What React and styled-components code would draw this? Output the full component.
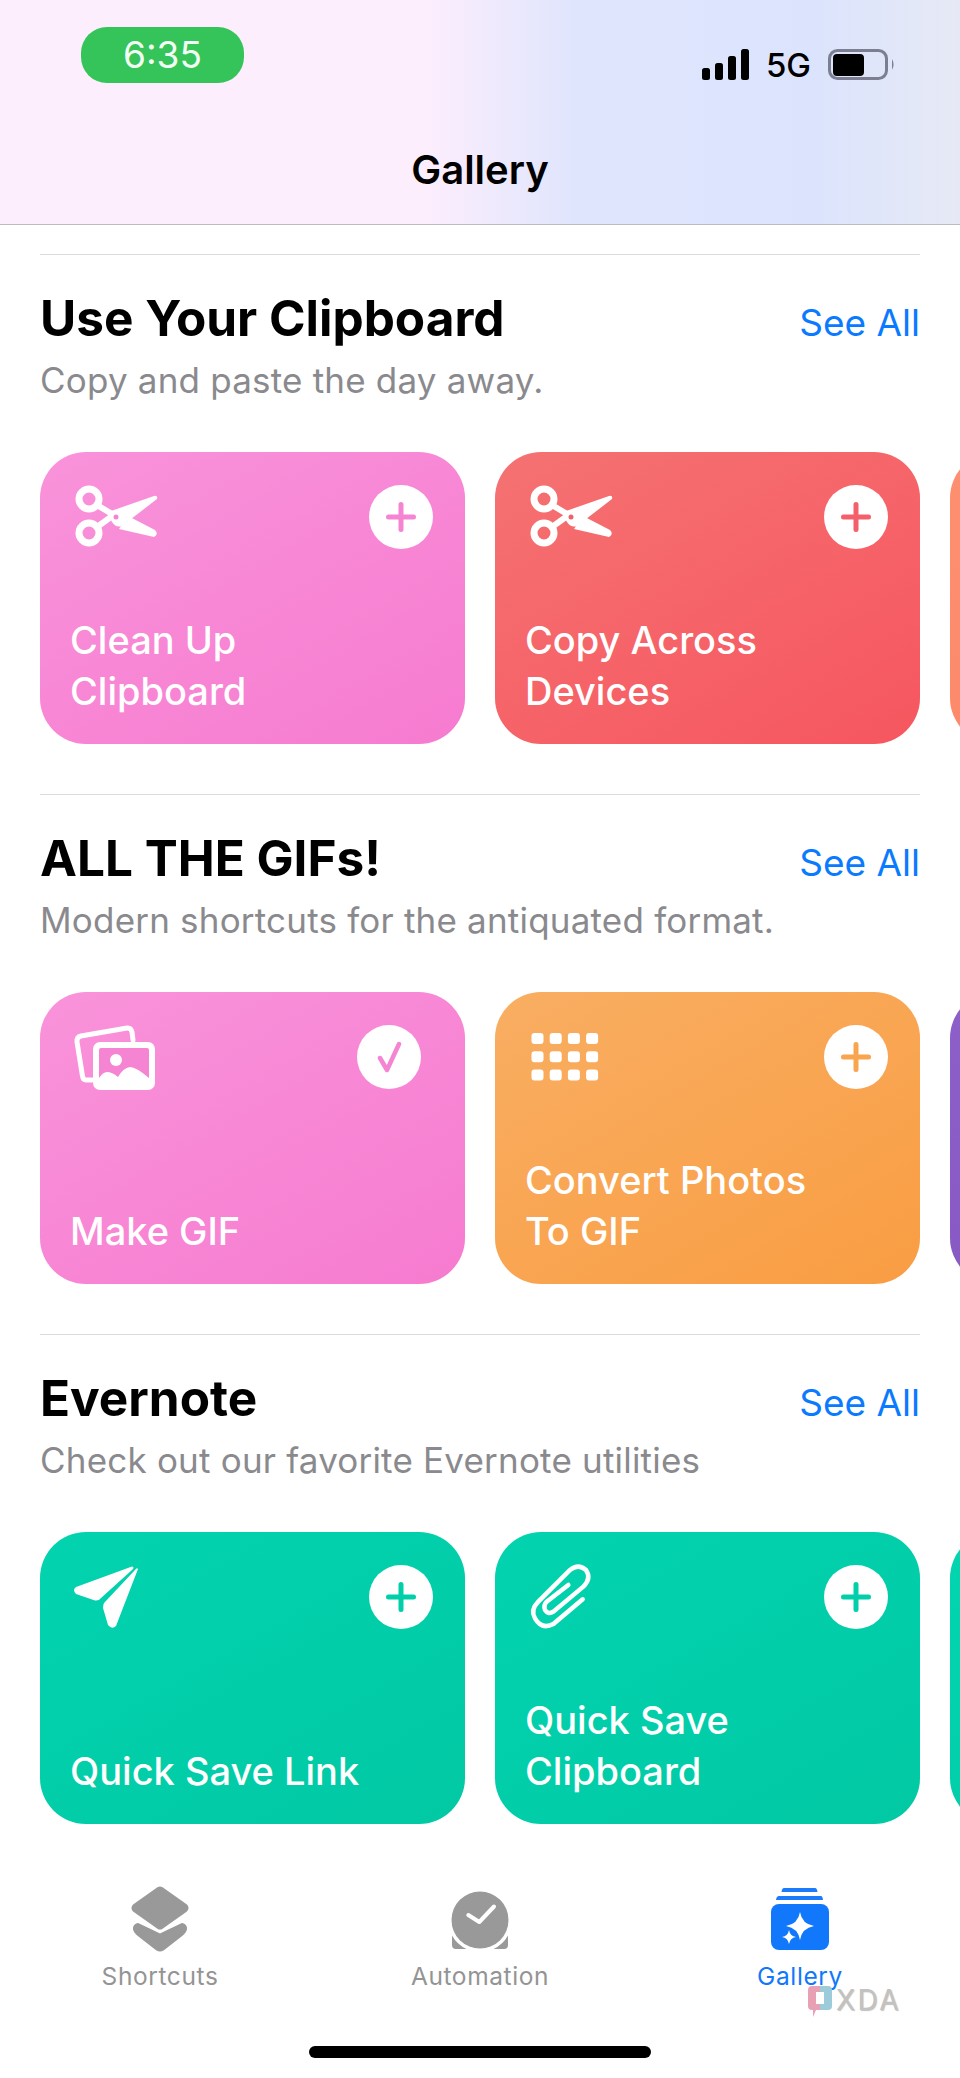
import React from 'react';
import styled, { createGlobalStyle } from 'styled-components';

const GlobalStyle = createGlobalStyle`
  html, body {
    margin: 0;
    padding: 0;
    background: #fff;
  }
  * { box-sizing: border-box; }
`

const FONT = `Inter, "Liberation Sans", sans-serif`

const Scissors = ({ hole }) => (
  <svg width="90" height="76" viewBox="-1 -4 90 76">
    <circle cx="18" cy="15" r="10" fill="none" stroke="#fff" strokeWidth="7" />
    <circle cx="18" cy="49" r="10" fill="none" stroke="#fff" strokeWidth="7" />
    <path d="M26 21 L46 33 M26 43 L44 30" stroke="#fff" strokeWidth="6" strokeLinecap="round" />
    <path d="M40 27 L83 12 Q87 11 86 15 L51 42 Q45 44 41 38 Q37 32 40 27 Z" fill="#fff" />
    <path d="M57 32 L84 46 Q88 50 83 53 L48 45 Z" fill="#fff" />
    <circle cx="45" cy="33" r="2.5" fill={hole} />
  </svg>
)

const Photos = ({ hole }) => (
  <svg width="90" height="76" viewBox="0 0 90 76">
    <path d="M22 60 H16 Q13 60 12.5 56 L7 22 Q6.5 17 11 16 L57 8 Q61 7.5 62 12 L63 20" fill="none" stroke="#fff" strokeWidth="5" strokeLinecap="round" />
    <rect x="23" y="22" width="62" height="48" rx="7" fill="#fff" />
    <rect x="29" y="28" width="50" height="36" rx="2" fill={hole} />
    <circle cx="46" cy="40" r="6" fill="#fff" />
    <path d="M29 58 Q33 52 37 52 Q42 52 48 57 Q53 48 60 47 Q66 47 79 58 V64 H29 Z" fill="#fff" />
  </svg>
)

const Keypad = () => (
  <svg width="90" height="76" viewBox="0 0 90 76">
    {[13, 31.3, 49.6].map((y) =>
      [6.5, 24.7, 42.9, 61.1].map((x) => (
        <rect key={`${x}-${y}`} x={x} y={y} width="12" height="11" rx="3" fill="#fff" />
      ))
    )}
  </svg>
)

const Plane = () => (
  <svg width="90" height="76" viewBox="0 0 90 76">
    <path d="M62 6.5 L6 27 Q2 30 6 34 L25 40.5 Q29 41 31 38 L62 10 Q65 7 62 6.5 Z" fill="#fff" />
    <path d="M65 10 L34 43 Q33 45 33 48 L38 65 Q42 70 46 66 L68 9 Q67 7 65 10 Z" fill="#fff" />
  </svg>
)

const Clip = () => (
  <svg width="90" height="76" viewBox="0 0 90 76">
    <path
      d="M57.7 39.3 L28.3 64 Q16.7 70 10 58.3 Q5 50 13.3 41.7 L45 10 Q53.3 3.3 61 10 Q66.7 18.3 58.3 26.7 L28.3 51.7 Q23.3 55 20 50 Q18.3 45 21.7 41.7 L43.3 25"
      fill="none"
      stroke="#fff"
      strokeWidth="4.5"
      strokeLinecap="round"
    />
  </svg>
)

const ICONS = { scissors: Scissors, photos: Photos, keypad: Keypad, plane: Plane, clip: Clip }

const SECTIONS = [
  {
    title: 'Use Your Clipboard',
    sub: 'Copy and paste the day away.',
    peek: ['#fd9070', '#fb8466'],
    cards: [
      { name: 'Clean Up\nClipboard', icon: 'scissors', from: '#f993da', to: '#f67bd0', accent: '#f585d3' },
      { name: 'Copy Across\nDevices', icon: 'scissors', from: '#f57272', to: '#f6565f', accent: '#f4606a' },
    ],
  },
  {
    title: 'ALL THE GIFs!',
    sub: 'Modern shortcuts for the antiquated format.',
    peek: ['#8d5fc9', '#8455c0'],
    cards: [
      { name: 'Make GIF', icon: 'photos', from: '#f993da', to: '#f67bd0', accent: '#f585d3', done: true },
      { name: 'Convert Photos\nTo GIF', icon: 'keypad', from: '#f9ae62', to: '#f99d43', accent: '#f9a44f' },
    ],
  },
  {
    title: 'Evernote',
    sub: 'Check out our favorite Evernote utilities',
    peek: ['#02d5b1', '#01c9a4'],
    cards: [
      { name: 'Quick Save Link', icon: 'plane', from: '#02d3af', to: '#01c9a4', accent: '#01cfa9' },
      { name: 'Quick Save\nClipboard', icon: 'clip', from: '#02d3af', to: '#01c9a4', accent: '#01cfa9' },
    ],
  },
]

function App() {
  return (
    <Screen>
      <GlobalStyle />
      <Header>
        <StatusBar>
          <TimePill>6:35</TimePill>
          <StatusIcons>
            <svg width="47" height="31" viewBox="0 0 47 31">
              <rect x="0" y="19" width="8" height="12" rx="2.5" fill="#000" />
              <rect x="13" y="14" width="8" height="17" rx="2.5" fill="#000" />
              <rect x="26" y="7" width="8" height="24" rx="2.5" fill="#000" />
              <rect x="39" y="0" width="8" height="31" rx="2.5" fill="#000" />
            </svg>
            <Network>5G</Network>
            <svg width="67" height="31" viewBox="0 0 67 31">
              <rect x="1.5" y="1.5" width="57" height="28" rx="8" fill="none" stroke="#7c7f92" strokeWidth="3" />
              <rect x="5" y="5" width="31" height="22" rx="4" fill="#000" />
              <path d="M64 10 Q67 15.5 64 21 Z" fill="#7c7f92" />
            </svg>
          </StatusIcons>
        </StatusBar>
        <PageTitle>Gallery</PageTitle>
      </Header>

      <Main>
        {SECTIONS.map((section) => (
          <Section key={section.title}>
            <SectionHead>
              <SectionTitle>{section.title}</SectionTitle>
              <SeeAll>See All</SeeAll>
            </SectionHead>
            <SectionSub>{section.sub}</SectionSub>
            <CardRow>
              {section.cards.map((card) => {
                const Icon = ICONS[card.icon]
                return (
                  <Card key={card.name} $from={card.from} $to={card.to}>
                    <CardTop>
                      <Icon hole={card.accent} />
                      <RoundButton $done={card.done}>
                        {card.done ? (
                          <svg width="30" height="32" viewBox="0 0 30 32">
                            <path d="M6 17 L13 29 L25 3" fill="none" stroke={card.accent} strokeWidth="4.5" strokeLinecap="round" strokeLinejoin="round" />
                          </svg>
                        ) : (
                          <svg width="30" height="30" viewBox="0 0 30 30">
                            <path d="M15 2.5 V27.5 M2.5 15 H27.5" stroke={card.accent} strokeWidth="5" strokeLinecap="round" />
                          </svg>
                        )}
                      </RoundButton>
                    </CardTop>
                    <CardName>{card.name}</CardName>
                  </Card>
                )
              })}
              <Card $from={section.peek[0]} $to={section.peek[1]} />
            </CardRow>
          </Section>
        ))}
      </Main>

      <Nav>
        <Tabs>
          <Tab>
            <svg width="60" height="68" viewBox="0 0 60 68">
              <path d="M30 6 L54 23 L30 40 L6 23 Z" fill="#999" stroke="#999" strokeWidth="9" strokeLinejoin="round" />
              <path d="M4.5 44 Q4 41 8 39.5 L30 50 L52 39.5 Q56 41 55.5 44 Q55 47 51 50 L33 64 Q30 66 27 64 L9 50 Q5 47 4.5 44 Z" fill="#999" stroke="#999" strokeWidth="3" strokeLinejoin="round" />
            </svg>
            <TabLabel>Shortcuts</TabLabel>
          </Tab>
          <Tab>
            <svg width="60" height="68" viewBox="0 0 60 68">
              <circle cx="30" cy="35" r="28.5" fill="#999" />
              <path d="M18.3 30 L29.3 37 L44 21.5" fill="none" stroke="#fff" strokeWidth="4" strokeLinecap="round" strokeLinejoin="round" />
              <path d="M2 50.5 A32 32 0 0 0 16.5 64 H6 Q2 64 2 60 Z" fill="#999" />
              <path d="M58 50.5 A32 32 0 0 1 43.5 64 H54 Q58 64 58 60 Z" fill="#999" />
            </svg>
            <TabLabel>Automation</TabLabel>
          </Tab>
          <Tab>
            <svg width="60" height="68" viewBox="0 0 60 68">
              <path d="M14 3 H45 Q47 3 47.5 7 H11.5 Q12 3 14 3 Z" fill="#1b7bfb" />
              <path d="M9 11 H51 Q52.5 11 53 15 H6 Q6.5 11 9 11 Z" fill="#1b7bfb" />
              <rect x="1" y="19" width="58" height="46" rx="8" fill="#1178fb" />
              <path d="M30 27 Q32 39 44 41 Q32 43 30 55 Q28 43 16 41 Q28 39 30 27 Z" fill="#fff" />
              <path d="M19 45 Q20 51 26 52 Q20 53 19 59 Q18 53 12 52 Q18 51 19 45 Z" fill="#fff" />
            </svg>
            <TabLabel $active>Gallery</TabLabel>
          </Tab>
        </Tabs>
        <HomeBar />
      </Nav>

      <Watermark>
        <svg width="26" height="34" viewBox="0 0 26 34">
          <path d="M5 2 H13 V8 H9 V20 H13 V26 H9 L6 33 V26 H5 Q1 26 1 22 V6 Q1 2 5 2 Z" fill="#e8a0b5" />
          <path d="M13 2 H21 Q25 2 25 6 V22 Q25 26 21 26 H13 V20 H17 V8 H13 Z" fill="#9ccbd9" />
        </svg>
        <WatermarkText>XDA</WatermarkText>
      </Watermark>
    </Screen>
  )
}

const Screen = styled.div`
  position: relative;
  width: 960px;
  height: 2078px;
  display: flex;
  flex-direction: column;
  overflow: hidden;
  background: #fff;
  font-family: ${FONT};
`
const Header = styled.header`
  height: 225px;
  flex-shrink: 0;
  border-bottom: 1px solid #bcbcc0;
  background: linear-gradient(90deg, #fdeefd 0%, #fdeefd 44%, #dfe5fd 60%, #dce4fd 85%, #e6e9f5 100%);
`
const StatusBar = styled.div`
  display: flex;
  justify-content: space-between;
  align-items: flex-start;
  padding: 27px 65px 0 81px;
`
const TimePill = styled.div`
  width: 163px;
  height: 56px;
  border-radius: 26px;
  background: #34c459;
  color: #f2fff4;
  font-size: 37px;
  line-height: 56px;
  text-align: center;
`
const StatusIcons = styled.div`
  display: flex;
  align-items: center;
  gap: 17px;
  margin-top: 21px;
`
const Network = styled.span`
  font-size: 33px;
  line-height: 31px;
  font-weight: 500;
  color: #000;
  margin-top: 2px;
`
const PageTitle = styled.div`
  margin-top: 65px;
  font-size: 40px;
  line-height: 44px;
  font-weight: 600;
  color: #000;
  text-align: center;
`
const Main = styled.main`
  flex: 1;
  overflow: hidden;
  padding: 29px 40px 0;
`
const Section = styled.section`
  height: 540px;
  padding-top: 39px;
  border-top: 1px solid #dcdcde;
`
const SectionHead = styled.div`
  display: flex;
  justify-content: space-between;
  align-items: center;
  height: 48px;
`
const SectionTitle = styled.h2`
  margin: 0;
  font-size: 49.5px;
  line-height: 48px;
  font-weight: 700;
  color: #000;
`
const SeeAll = styled.a`
  font-size: 37px;
  line-height: 42px;
  margin-top: 10px;
  color: #0a7aff;
`
const SectionSub = styled.p`
  margin: 19px 0 0;
  font-size: 35px;
  line-height: 38px;
  letter-spacing: 0.2px;
  color: #8a8a8e;
`
const CardRow = styled.div`
  display: flex;
  gap: 30px;
  margin-top: 53px;
`
const Card = styled.div`
  width: 425px;
  height: 292px;
  flex-shrink: 0;
  display: flex;
  flex-direction: column;
  padding: 28px 30px 27px;
  border-radius: 46px;
  background: linear-gradient(150deg, ${(p) => p.$from}, ${(p) => p.$to});
`
const CardTop = styled.div`
  display: flex;
  justify-content: space-between;
  align-items: flex-start;
`
const RoundButton = styled.div`
  width: 64px;
  height: 64px;
  margin-top: 5px;
  margin-right: ${(p) => (p.$done ? '14px' : '2px')};
  display: flex;
  align-items: center;
  justify-content: center;
  border-radius: 50%;
  background: #fff;
`
const CardName = styled.div`
  margin-top: auto;
  font-size: 38px;
  line-height: 51px;
  font-weight: 500;
  color: #fff;
  white-space: pre-line;
`
const Nav = styled.nav`
  height: 218px;
  flex-shrink: 0;
  padding-top: 25px;
`
const Tabs = styled.div`
  display: grid;
  grid-template-columns: repeat(3, 1fr);
`
const Tab = styled.div`
  display: flex;
  flex-direction: column;
  align-items: center;
  gap: 9px;
`
const TabLabel = styled.span`
  font-size: 24.5px;
  line-height: 28px;
  letter-spacing: 0.6px;
  color: ${(p) => (p.$active ? '#1178fb' : '#949494')};
`
const HomeBar = styled.div`
  width: 342px;
  height: 12px;
  margin: 56px auto 0;
  border-radius: 6px;
  background: #000;
`
const Watermark = styled.div`
  position: absolute;
  left: 807px;
  top: 1984px;
  display: flex;
  align-items: flex-start;
  gap: 3px;
`
const WatermarkText = styled.span`
  font-size: 28px;
  line-height: 30px;
  font-weight: 400;
  letter-spacing: 2.5px;
  margin-top: 1px;
  color: #c2c2c2;
  text-shadow: 1px 1px 1px rgba(0, 0, 0, 0.25);
`

export default App;
